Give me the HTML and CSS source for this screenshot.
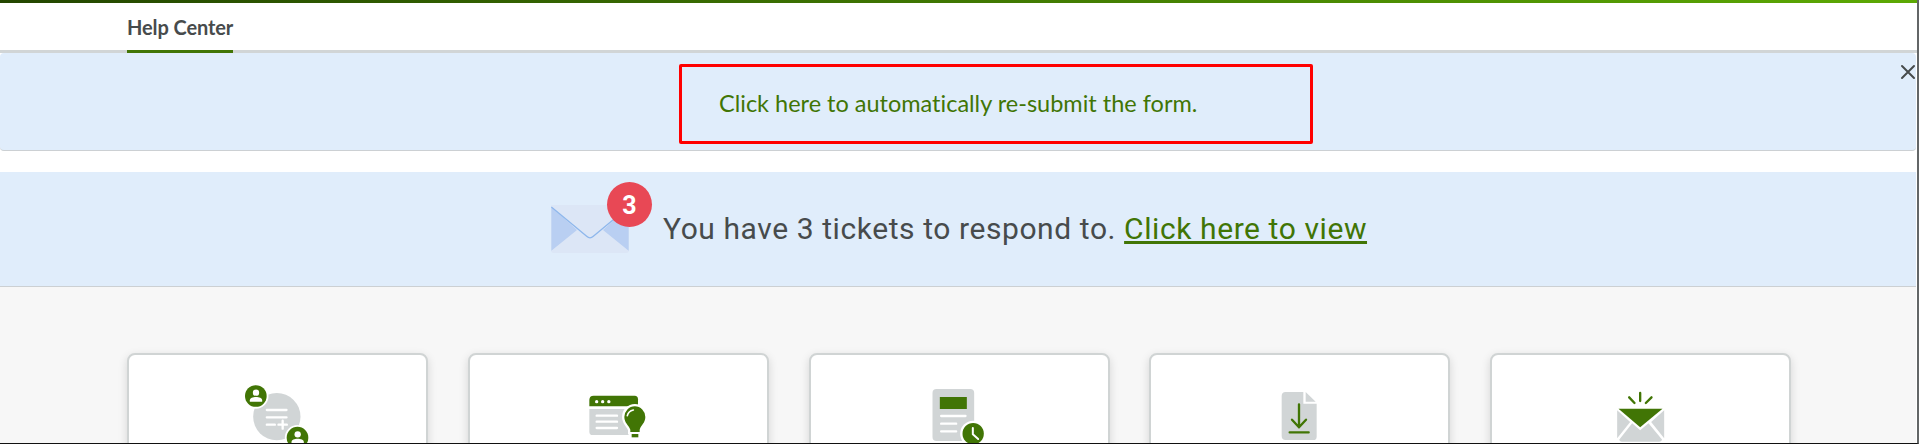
FILE: index.html
```html
<!DOCTYPE html>
<html lang="en">
<head>
<meta charset="utf-8">
<title>Help Center</title>
<link rel="stylesheet" href="styles.css">
</head>
<body>
<div class="page">
  <header class="header">
    <nav class="nav"><a class="tab" href="#">Help Center</a></nav>
  </header>
  <section class="notice">
    <div class="highlight"><a class="resubmit" href="#">Click here to automatically re-submit the form.</a></div>
    <button class="close" aria-label="Close">
      <svg width="16" height="16" viewBox="0 0 16 16"><path d="M2 2L14 14M14 2L2 14" fill="none" stroke="#474b4c" stroke-width="2" stroke-linecap="round"/></svg>
    </button>
  </section>
  <section class="tickets">
    <div class="mail">
      <svg width="78" height="48" viewBox="0 0 234 144">
        <rect width="234" height="144" rx="8" fill="#dce6f6"/>
        <path d="M1 5L78 75L1 137zM233 5L156 75L233 137z" fill="#b9cff2"/>
        <path d="M1 5L107 94Q117 103 127 94L233 5V0H1z" fill="#dce6f6"/>
        <path d="M1 6L107 94Q117 103 127 94L233 6" fill="none" stroke="#8eb7ec" stroke-width="4"/>
      </svg>
      <span class="badge">3</span>
    </div>
    <p class="message"><span class="lead">You have 3 tickets to respond to.</span> <a class="view" href="#">Click here to view</a></p>
  </section>
  <main class="cards">
    <a class="card" href="#">
      <svg class="icon" viewBox="398.5 120 210 192">
        <circle cx="500" cy="230" r="71" fill="#d1d5d6"/>
        <path d="M470 210H529M470 232H529M470 254H494M505 254H530M517.500 242V266" fill="none" stroke="#fff" stroke-width="7" stroke-linecap="round"/>
        <g id="person"><circle cx="437" cy="168" r="38" fill="#fff"/><circle cx="437" cy="168" r="32.500" fill="#417505"/><circle cx="437.500" cy="158" r="9.500" fill="#fff"/><path d="M419 185V181C419 168 456 168 456 181V185z" fill="#fff"/></g>
        <use href="#person" x="125" y="125"/>
      </svg>
    </a>
    <a class="card" href="#">
      <svg class="icon" viewBox="401 120 210 192">
        <path d="M420 199V180Q420 167 433 167H556Q566 167 566 178V199z" fill="#417505"/>
        <g fill="#fff"><circle cx="442" cy="185" r="5"/><circle cx="460" cy="185" r="5"/><circle cx="478.500" cy="185" r="5"/></g>
        <path d="M420 207H566V285H430Q420 285 420 275z" fill="#d1d5d6"/>
        <path d="M442 227H503M442 245H503M442 264H503" stroke="#fff" stroke-width="7" stroke-linecap="round"/>
        <path d="M543 276V269C538 255 525 249 525 231A31.500 32 0 0 1 588 231C588 249 575 255 571 269V276z" fill="#417505" stroke="#fff" stroke-width="14" paint-order="stroke"/>
        <path d="M538 277H576V298H538z" fill="#fff"/>
        <path d="M547 282H567V292H547z" fill="#417505"/>
        <path d="M534 227Q537 213 552 210" fill="none" stroke="#fff" stroke-width="5" stroke-linecap="round"/>
      </svg>
    </a>
    <a class="card" href="#">
      <svg class="icon" viewBox="403.500 120 210 192">
        <rect x="429" y="147" width="125" height="156" rx="12" fill="#d1d5d6"/>
        <rect x="451" y="171" width="81" height="36" fill="#417505"/>
        <path d="M455 228H528M455 251H500M455 274H500" stroke="#fff" stroke-width="7" stroke-linecap="round"/>
        <circle cx="551" cy="281" r="39" fill="#fff"/><circle cx="551" cy="281" r="32" fill="#417505"/>
        <path d="M550 264V283L566 297" fill="none" stroke="#fff" stroke-width="6" stroke-linecap="round" stroke-linejoin="round"/>
      </svg>
    </a>
    <a class="card" href="#">
      <svg class="icon" viewBox="406 120 210 192">
        <path d="M468 156H521V191H561V290Q561 300 551 300H468Q456 300 456 288V168Q456 156 468 156zM528 156L558 185H528z" fill="#d1d5d6"/>
        <path d="M508 193V262M487 239L508 262L529 239M480 277H537" fill="none" stroke="#417505" stroke-width="7" stroke-linecap="round" stroke-linejoin="round"/>
      </svg>
    </a>
    <a class="card" href="#">
      <svg class="icon" viewBox="408.500 120 210 192">
        <path d="M511 159V183M478 172L494 189M545 172L528 189" fill="none" stroke="#417505" stroke-width="7" stroke-linecap="round"/>
        <path d="M446 206H578L511 262z" fill="#417505"/>
        <path d="M442 211L481 246L442 295zM583 211L544 246L583 295zM487 250L511 271L536 250L577 299Q574 305 568 305H456Q450 305 448 299z" fill="#d1d5d6"/>
      </svg>
    </a>
  </main>
</div>
</body>
</html>
```
FILE: styles.css
```css
* { box-sizing: border-box; }
body { margin: 0; }
.page {
  height: 444px;
  display: flex;
  flex-direction: column;
  overflow: hidden;
  background: #fff;
  border-right: 2px solid #636667;
  border-bottom: 1px solid #111;
  font-family: Lato, "Liberation Sans", sans-serif;
}
.header {
  flex: none;
  height: 53px;
  padding-left: 127px;
  border-bottom: 3px solid #d1d5d6;
  background: linear-gradient(90deg, #234600, #5ca903) top / 100% 3px no-repeat #fff;
}
.nav { display: flex; height: 53px; }
.tab {
  height: 53px;
  padding-top: 15px;
  border-bottom: 3px solid #417505;
  color: #474b4c;
  font-size: 20px;
  font-weight: 700;
  letter-spacing: -0.1px;
  line-height: 24px;
  text-decoration: none;
  white-space: nowrap;
}
.notice {
  flex: none;
  height: 98px;
  margin-right: 1px;
  padding: 11px 0 0 679px;
  display: flex;
  justify-content: space-between;
  align-items: flex-start;
  background: #e0edfb;
  border-bottom: 1px solid #ccd0d3;
  border-radius: 4px;
}
.highlight {
  width: 634px;
  height: 80px;
  padding: 0 0 2px 37px;
  display: flex;
  align-items: center;
  border: 3px solid #f00;
  border-radius: 2px;
}
.resubmit {
  color: #417505;
  font-size: 23.500px;
  line-height: 30px;
  font-variant-ligatures: none;
  text-decoration: none;
  white-space: nowrap;
}
.close { margin: 0; padding: 0; border: 0; background: none; line-height: 0; }
.tickets {
  flex: none;
  height: 115px;
  margin: 21px 1px 0 0;
  padding: 33px 0 0 551px;
  display: flex;
  align-items: flex-start;
  background: #e0edfb;
  border-bottom: 1px solid #ccd0d3;
}
.mail { position: relative; width: 78px; height: 48px; flex: none; }
.mail svg { display: block; }
.badge {
  position: absolute;
  left: 56px;
  top: -23px;
  width: 45px;
  height: 45px;
  border-radius: 50%;
  background: #e84855;
  color: #fff;
  font: 700 25px/47px Roboto, sans-serif;
  text-align: center;
}
.message {
  margin: 5px 0 0 34px;
  color: #474b4c;
  font: 400 30px/38px Roboto, sans-serif;
  letter-spacing: 0.58px;
  white-space: nowrap;
}
.view {
  color: #417505;
  text-decoration: underline;
  text-decoration-thickness: 3px;
  text-underline-offset: 2px;
  text-decoration-skip-ink: none;
}
.cards {
  flex: 1;
  min-height: 0;
  padding: 66px 0 0 127px;
  display: grid;
  grid-template-columns: repeat(5, 301px);
  column-gap: 39.800px;
  background: #f7f7f7;
  margin-right: 1px;
}
.card {
  height: 180px;
  padding-top: 25px;
  text-align: center;
  background: #fff;
  border: 2px solid #d0d4d4;
  border-radius: 8px;
  box-shadow: 0 3px 10px rgba(0, 0, 0, .14);
}
.icon { width: 70px; height: 64px; }
```
